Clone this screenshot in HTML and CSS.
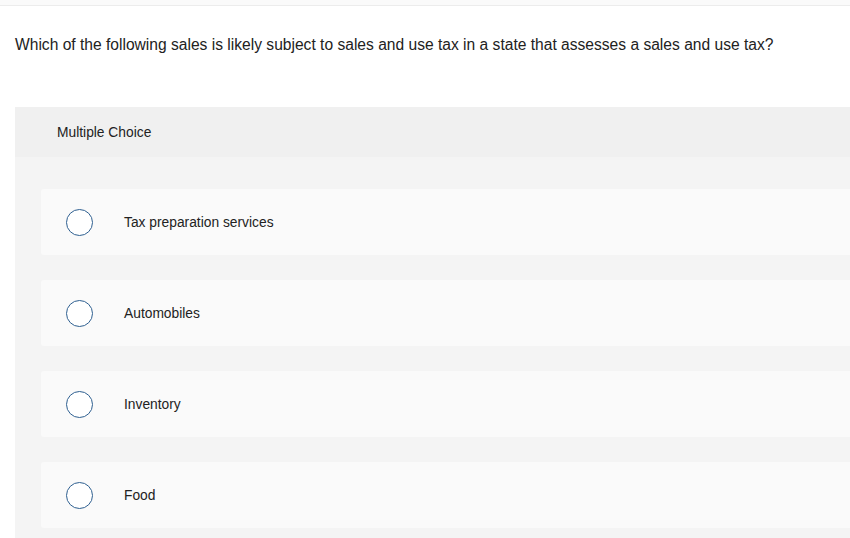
FILE: index.html
```html
<!DOCTYPE html>
<html>
<head>
<meta charset="utf-8">
<link rel="stylesheet" href="styles.css">
</head>
<body>
<div class="topbar"></div>
<p class="question">Which of the following sales is likely subject to sales and use tax in a state that assesses a sales and use tax?</p>
<section class="panel">
  <div class="panel-head">Multiple Choice</div>
  <div class="options">
    <div class="option"><span class="radio"></span><span class="label">Tax preparation services</span></div>
    <div class="option"><span class="radio"></span><span class="label">Automobiles</span></div>
    <div class="option"><span class="radio"></span><span class="label">Inventory</span></div>
    <div class="option"><span class="radio"></span><span class="label">Food</span></div>
  </div>
</section>
</body>
</html>
```
FILE: styles.css
```css
html, body {
  margin: 0;
  padding: 0;
  background: #ffffff;
  font-family: "Liberation Sans", Arial, sans-serif;
  color: #222222;
}
.topbar {
  height: 5px;
  background: #fafafa;
  border-bottom: 1px solid #ececec;
}
.question {
  margin: 30px 0 0 15px;
  font-size: 15.6px;
  line-height: 18px;
  color: #222222;
}
.panel {
  margin: 53px 0 0 15px;
  background: #f4f4f4;
  padding-bottom: 20px;
}
.panel-head {
  height: 50px;
  background: #f0f0f0;
  padding-left: 42px;
  display: flex;
  align-items: center;
  font-size: 13.8px;
  color: #222222;
}
.options {
  padding: 32px 0 0 26px;
  display: flex;
  flex-direction: column;
  gap: 25px;
}
.option {
  height: 66px;
  background: #fafafa;
  border-radius: 3px 0 0 3px;
  display: flex;
  align-items: center;
  padding-left: 25px;
}
.radio {
  width: 25px;
  height: 25px;
  border: 1.5px solid #2e5f90;
  border-radius: 50%;
  background: #ffffff;
  flex: none;
}
.label {
  margin-left: 31px;
  font-size: 13.8px;
  color: #222222;
}
```
